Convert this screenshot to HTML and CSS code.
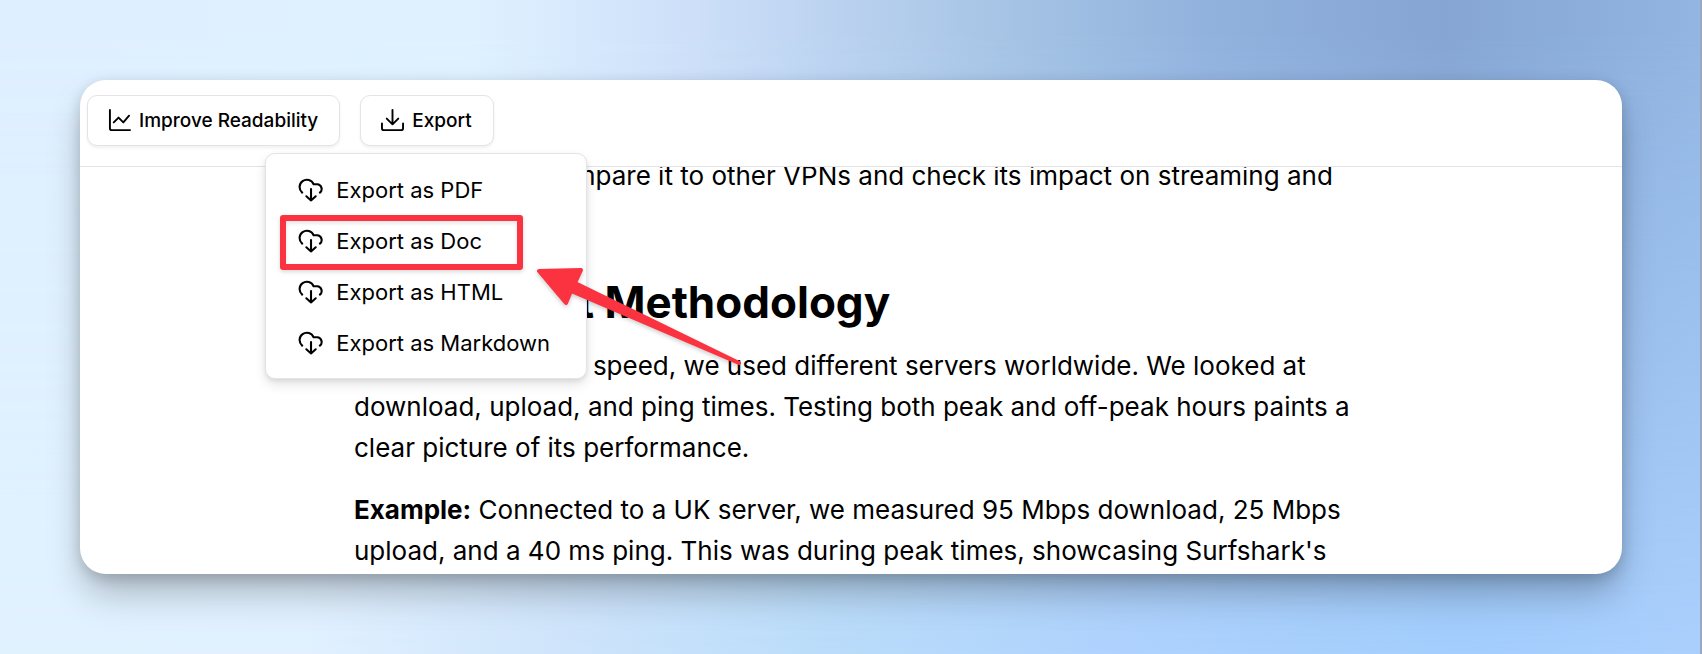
FILE: index.html
```html
<!DOCTYPE html>
<html lang="en">
<head>
  <meta charset="utf-8">
  <meta name="viewport" content="width=device-width">
  <title>Export</title>
  <link rel="stylesheet" href="styles.css">
</head>
<body>
  <svg class="sprite" aria-hidden="true">
    <symbol id="cloud" viewBox="0 0 24 24">
      <path d="M12.500 11.500v11M8 18.500l4.500 4 4.500-4"/>
      <path d="M4 15A7 7 0 1 1 15 7h3.500A4.500 4.500 0 0 1 21 15"/>
    </symbol>
  </svg>
  <main class="window">
    <header class="toolbar">
      <button class="btn">
        <svg class="icon" viewBox="0 0 24 24"><path d="M2 1v19a2 2 0 0 0 2 2h19M6 14l5-5 5 5 6-7"/></svg>
        Improve Readability
      </button>
      <div class="dropdown">
        <button class="btn">
          <svg class="icon" viewBox="0 0 24 24"><path d="M12 1v15M6 10l6 6 6-6M1 15v5a2 2 0 0 0 2 2h18a2 2 0 0 0 2-2v-5"/></svg>
          Export
        </button>
        <div class="menu">
          <button class="item"><svg class="cloud"><use href="#cloud"/></svg>Export as PDF</button>
          <button class="item marked"><svg class="cloud"><use href="#cloud"/></svg>Export as Doc</button>
          <button class="item"><svg class="cloud"><use href="#cloud"/></svg>Export as HTML</button>
          <button class="item"><svg class="cloud"><use href="#cloud"/></svg>Export as Markdown</button>
          <svg class="arrow" viewBox="0 0 210 104">
            <path d="M6 6l42-1-6 13 164 80-168-72-5 12z"/>
          </svg>
        </div>
      </div>
    </header>
    <article class="content">
      <p>and ping. We'll compare it to other VPNs and check its impact on streaming and gaming.</p>
      <h2>Speed Test Methodology</h2>
      <p>To test Surfshark's speed, we used different servers worldwide. We looked at download, upload, and ping times. Testing both peak and off-peak hours paints a clear picture of its performance.</p>
      <p><b>Example:</b> Connected to a UK server, we measured 95 Mbps download, 25 Mbps upload, and a 40 ms ping. This was during peak times, showcasing Surfshark's</p>
    </article>
  </main>
</body>
</html>
```
FILE: styles.css
```css
*, *:before, *:after {
  box-sizing: border-box;
}
html, body {
  height: 100%;
}
body {
  position: relative;
  margin: 0;
  padding: 80px 78px 80px 80px;
  font-family: Inter, sans-serif;
  color: #000;
  border-right: 2px solid #97a9c0;
  background: linear-gradient(90deg, #e1f2ff 0%, #e1f1ff 18%, #d0e5fb 32%, #bbddfa 48%, #afd3fd 65%, #a3cefd 86%, #abd0fe 100%);
}
/* darker sky that fades out towards the bottom */
body:before {
  content: "";
  position: absolute;
  inset: 0;
  background: linear-gradient(90deg, #deefff 0%, #dff1ff 28%, #cddff9 41%, #b9d1ef 50%, #a2c1e3 61%, #92b2de 71%, #86a5d2 85%, #92b5e2 100%);
  -webkit-mask-image: linear-gradient(#000 5%, transparent);
  mask-image: linear-gradient(#000 5%, transparent);
}
button {
  font-family: inherit;
  color: inherit;
  background: #fff;
  cursor: pointer;
}
svg {
  fill: none;
  stroke: #000;
  stroke-width: 2;
  stroke-linecap: round;
  stroke-linejoin: round;
}
.sprite {
  display: none;
}
.window {
  position: relative;
  display: flex;
  flex-direction: column;
  height: 100%;
  background: #fff;
  border-radius: 26px;
  box-shadow: 0 22px 36px -4px rgba(0, 0, 0, 0.26), 0 4px 14px rgba(0, 0, 0, 0.16);
}
.toolbar {
  display: flex;
  gap: 20px;
  padding: 15px 7px 20px;
  border-bottom: 1px solid #e4e4e7;
}
.btn {
  display: flex;
  align-items: center;
  gap: 8px;
  height: 51px;
  padding: 0 21px 0 20px;
  border: 1px solid #e4e4e7;
  border-radius: 10px;
  box-shadow: 0 2px 3px rgba(0, 0, 0, 0.06);
  font-size: 19px;
  font-weight: 500;
}
.icon {
  width: 23px;
  height: 23px;
}
.dropdown {
  position: relative;
}
.menu {
  position: absolute;
  z-index: 1;
  top: 58px;
  left: -95px;
  width: 322px;
  padding: 10px;
  background: #fff;
  border: 1px solid #e4e4e7;
  border-radius: 10px;
  box-shadow: 0 6px 12px rgba(0, 0, 0, 0.1), 0 2px 4px rgba(0, 0, 0, 0.08);
}
.item {
  position: relative;
  display: flex;
  align-items: center;
  gap: 13px;
  width: 100%;
  height: 51px;
  padding: 0 22px;
  border: 0;
  background: none;
  font-size: 22px;
  white-space: nowrap;
}
.cloud {
  width: 25px;
  height: 25px;
}
/* highlight drawn round one item */
.marked:after {
  content: "";
  position: absolute;
  top: 0;
  left: 4px;
  width: 243px;
  height: 55px;
  border: 6px solid #fb3340;
  border-radius: 3px;
  box-shadow: 0 2px 4px rgba(0, 0, 0, 0.15), inset 0 2px 4px rgba(0, 0, 0, 0.12);
}
.arrow {
  position: absolute;
  top: 111px;
  left: 267px;
  width: 210px;
  height: 104px;
  fill: #fb3340;
  stroke: #fb3340;
  stroke-width: 4;
  filter: drop-shadow(0 2px 2px rgba(0, 0, 0, 0.2));
}
.content {
  flex: 1;
  min-height: 0;
  overflow: hidden;
  padding: 0 264px 0 274px;
  border-radius: 0 0 26px 26px;
  font-size: 26px;
  line-height: 41px;
}
.content p {
  margin: 0 0 21px;
}
.content p:first-child {
  margin-top: -12px;
}
.content h2 {
  margin: 40px 0 18px;
  font-size: 44px;
  line-height: 50px;
  font-weight: 700;
}
```
